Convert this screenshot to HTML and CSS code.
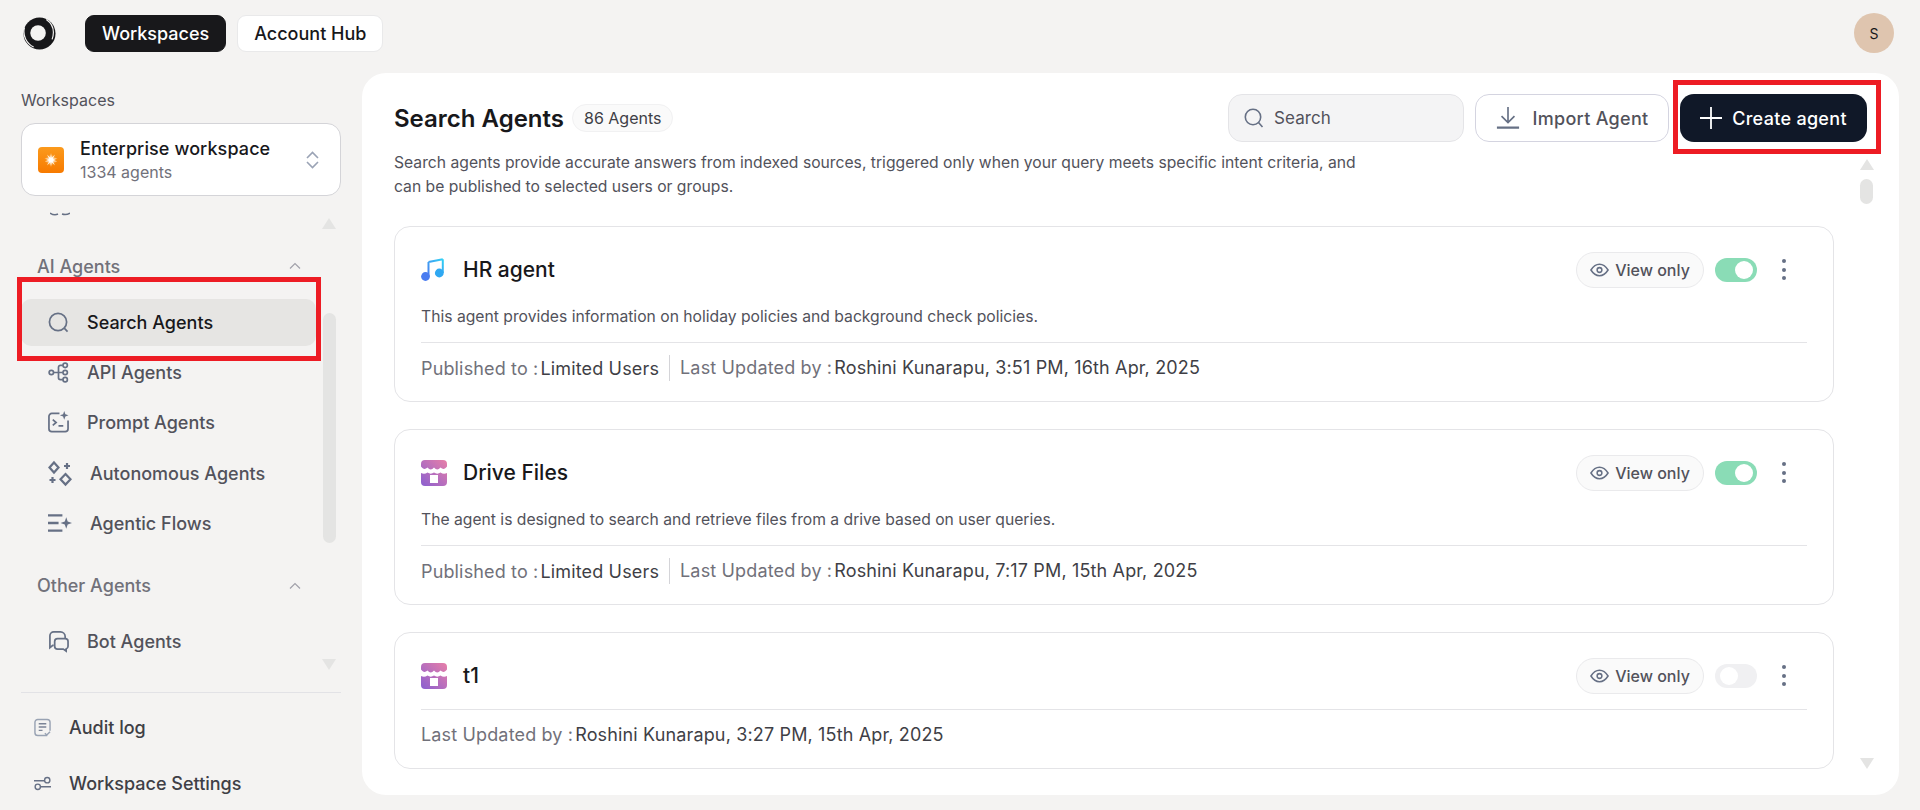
FILE: index.html
```html
<!DOCTYPE html>
<html lang="en">
<head>
  <meta charset="UTF-8" />
  <title>Search Agents</title>
  <link rel="stylesheet" href="styles.css">
</head>
<body>
  <header class="topbar">
    <svg class="logo" viewBox="0 0 34 34">
      <circle cx="17" cy="17" r="16.5" fill="#17171a"/>
      <circle cx="15.500" cy="16.500" r="8" fill="#f4f3f2"/>
      <path d="M24 2.500C30.500 7 33 14 30 23" fill="none" stroke="#f4f3f2" stroke-width="1.200"/>
      <path d="M1.500 11C-.5 19 3.500 27.500 11 31" fill="none" stroke="#f4f3f2" stroke-width="1.200"/>
    </svg>
    <a class="tab tab-active">Workspaces</a>
    <a class="tab">Account Hub</a>
    <div class="avatar">S</div>
  </header>

  <div class="layout">
    <aside class="sidebar">
      <div class="ws-label">Workspaces</div>
      <div class="ws-box">
        <svg class="ws-icon" viewBox="0 0 26 26">
          <defs>
            <linearGradient id="orange" x1="0" y1="0" x2="0" y2="1">
              <stop offset="0" stop-color="#fb9a1c"/>
              <stop offset="1" stop-color="#f77a00"/>
            </linearGradient>
            <radialGradient id="glow">
              <stop offset="0" stop-color="#fff"/>
              <stop offset="0.5" stop-color="#ffe9c8" stop-opacity=".6"/>
              <stop offset="1" stop-color="#ffb347" stop-opacity="0"/>
            </radialGradient>
          </defs>
          <rect width="26" height="26" rx="4" fill="url(#orange)"/>
          <circle cx="13" cy="13" r="6" fill="url(#glow)"/>
          <path d="M13 6l.7 5 3.300-3.500-2.300 4.300 4.800-.3-4.800 1.500 4.800 1.500-4.800-.3 2.300 4.300-3.300-3.500-.7 5-.7-5-3.300 3.500 2.300-4.300-4.800.3 4.800-1.500-4.800-1.500 4.800.3L9 7.500l3.300 3.500z" fill="#fff"/>
        </svg>
        <div class="ws-text">
          <div class="ws-name">Enterprise workspace</div>
          <div class="ws-count">1334 agents</div>
        </div>
        <svg class="ws-switch" viewBox="0 0 13 18" fill="none" stroke="#9aa3b5" stroke-width="1.600">
          <path d="M1 7L6.500 1.500 12 7"/>
          <path d="M1 11l5.500 5.500L12 11"/>
        </svg>
      </div>

      <div class="nav-scroll">
        <svg class="cut-icon" viewBox="0 0 20 4" fill="none" stroke="#667085" stroke-width="1.500">
          <path d="M0 1c3 2 6 2 8 1M12 2c3 1 5 1 8-1"/>
        </svg>

        <div class="nav-head">AI Agents
          <svg viewBox="0 0 12 8" fill="none" stroke="#a1a1aa" stroke-width="1.200"><path d="M1 6.500l5-5 5 5"/></svg>
        </div>
        <div class="nav-items">
          <a class="nav-item nav-item-active">
            <svg viewBox="0 0 22 22" fill="none" stroke="#667085" stroke-width="1.800"><circle cx="10.500" cy="10.500" r="9"/><path d="M17 17l3.500 3.500"/></svg>
            Search Agents
          </a>
          <a class="nav-item">
            <svg viewBox="0 0 22 22" fill="none" stroke="#667085" stroke-width="1.800"><circle cx="3.500" cy="11" r="2.300"/><circle cx="18" cy="3.500" r="2.300"/><circle cx="18" cy="11" r="2.300"/><circle cx="18" cy="18.500" r="2.300"/><path d="M6 11h9.500M15.500 3.500H13a2 2 0 0 0-2 2v11a2 2 0 0 0 2 2h2.500"/></svg>
            API Agents
          </a>
          <a class="nav-item">
            <svg viewBox="0 0 22 22" fill="none" stroke="#667085" stroke-width="1.800"><path d="M12 1.500H4a3 3 0 0 0-3 3v13a3 3 0 0 0 3 3h14a3 3 0 0 0 3-3V9"/><path d="M5 8l3.500 3L5 14M11 14.500h5"/><path d="M17 -1l1.200 3.300 3.300 1.200-3.300 1.200L17 8l-1.200-3.300-3.300-1.200 3.300-1.200z" fill="#667085" stroke="none"/></svg>
            Prompt Agents
          </a>
          <a class="nav-item nav-item-wide">
            <svg viewBox="1 0 23 24" fill="none" stroke="#667085" stroke-width="2.200"><path d="M6.500 1.500l4.500 5-4.500 5-4.500-5z"/><path d="M18 13l5 5.300-5 5.300-5-5.300z"/><path d="M19.500 2v6M16.500 5h6M5 16v6M2 19h6"/></svg>
            Autonomous Agents
          </a>
          <a class="nav-item nav-item-wide">
            <svg viewBox="0 0 25 24" fill="none" stroke="#667085" stroke-width="2.400"><path d="M0 4h15M0 12h11M0 20h15"/><path d="M19 6l1.500 4.500L25 12l-4.500 1.500L19 18l-1.500-4.500L13 12l4.500-1.500z" fill="#667085" stroke="none"/></svg>
            Agentic Flows
          </a>
        </div>

        <div class="nav-head nav-head-other">Other Agents
          <svg viewBox="0 0 12 8" fill="none" stroke="#a1a1aa" stroke-width="1.200"><path d="M1 6.500l5-5 5 5"/></svg>
        </div>
        <div class="nav-items">
          <a class="nav-item">
            <svg viewBox="0 0 22 22" fill="none" stroke="#667085" stroke-width="1.800"><path d="M6 15H5l-3 2.500V5a4 4 0 0 1 4-4h7a5 5 0 0 1 5 5v2"/><path d="M10 8h8a3 3 0 0 1 3 3v5a3 3 0 0 1-2 2.800V21l-3-2h-6a3 3 0 0 1-3-3v-5a3 3 0 0 1 3-3z"/></svg>
            Bot Agents
          </a>
        </div>

        <span class="scroll-arrow scroll-up"></span>
        <span class="scroll-thumb"></span>
        <span class="scroll-arrow scroll-down"></span>
      </div>

      <div class="side-foot">
        <a class="foot-item">
          <svg viewBox="0 0 18 20" fill="none" stroke="#98a2b3" stroke-width="1.500"><path d="M14 18.500H4a3 3 0 0 1-3-3v-11a3 3 0 0 1 3-3h10a3 3 0 0 1 3 3v9"/><path d="M5 6h8M5 9.500h8M5 13h4" stroke="#7b8496"/><path d="M11.500 16l2 2 3.500-3.500"/></svg>
          Audit log
        </a>
        <a class="foot-item">
          <svg viewBox="0 0 18 14" fill="none" stroke="#667085" stroke-width="1.500"><path d="M0 4h11M7 10.500h11"/><circle cx="14" cy="3.500" r="2.800"/><circle cx="4" cy="10.500" r="2.800"/></svg>
          Workspace Settings
        </a>
      </div>
    </aside>

    <main class="panel">
      <div class="panel-head">
        <div class="panel-top">
          <div class="title-row">
            <h1>Search Agents</h1>
            <span class="count-pill">86 Agents</span>
          </div>
          <div class="panel-actions">
            <div class="search-box">
              <svg viewBox="0 0 20 20" fill="none" stroke="#667085" stroke-width="1.600"><circle cx="9" cy="9" r="7.700"/><path d="M14.500 14.500l4 4.500"/></svg>
              Search
            </div>
            <a class="btn-import">
              <svg viewBox="0 0 26 24" fill="none" stroke="#667085" stroke-width="1.800"><path d="M13 0v16M6 10l7 7 7-7"/><path d="M1 22.500h24" stroke-width="2.400"/></svg>
              Import Agent
            </a>
            <a class="btn-create">
              <svg viewBox="0 0 22 22" fill="none" stroke="#fff" stroke-width="1.800"><path d="M11 0v22M0 11h22"/></svg>
              Create agent
            </a>
          </div>
        </div>
        <p class="panel-desc">Search agents provide accurate answers from indexed sources, triggered only when your query meets specific intent criteria, and can be published to selected users or groups.</p>
      </div>

      <span class="scroll-arrow panel-up"></span>
      <span class="scroll-thumb panel-thumb"></span>
      <span class="scroll-arrow scroll-down panel-down"></span>

      <div class="cards">
        <section class="card">
          <div class="card-top">
            <svg class="card-icon" viewBox="0 0 23 23">
              <defs>
                <linearGradient id="music" x1="0" y1="1" x2="1" y2="0">
                  <stop offset="0" stop-color="#4a7cf0"/>
                  <stop offset="1" stop-color="#2fd0f5"/>
                </linearGradient>
              </defs>
              <path d="M7.500 4L21.800 1.200M7.500 4V18M21.800 1.200V15" fill="none" stroke="url(#music)" stroke-width="2"/>
              <circle cx="4.500" cy="18.500" r="4.400" fill="#4a7cf0"/>
              <circle cx="18.300" cy="15" r="4.400" fill="#2fa8f2"/>
            </svg>
            <h2>HR agent</h2>
            <div class="card-tools">
              <span class="view-pill">
                <svg viewBox="0 0 20 14" fill="none" stroke="#667085" stroke-width="1.600"><path d="M1 7c2.500-4 5.500-6 9-6s6.500 2 9 6c-2.500 4-5.500 6-9 6s-6.500-2-9-6z"/><circle cx="10" cy="7" r="2.500"/></svg>
                View only
              </span>
              <span class="toggle toggle-on"></span>
              <span class="dots"><i></i><i></i><i></i></span>
            </div>
          </div>
          <p class="card-desc">This agent provides information on holiday policies and background check policies.</p>
          <div class="card-meta">
            <span class="meta-part"><b>Published to :</b>Limited Users</span>
            <span class="meta-part"><b>Last Updated by :</b>Roshini Kunarapu, 3:51 PM, 16th Apr, 2025</span>
          </div>
        </section>

        <section class="card">
          <div class="card-top">
            <svg class="card-icon card-icon-store" viewBox="0 0 26 26">
              <defs>
                <linearGradient id="store" x1="0" y1="1" x2="1" y2="0">
                  <stop offset="0" stop-color="#8a5fd0"/>
                  <stop offset="1" stop-color="#e87fa8"/>
                </linearGradient>
              </defs>
              <rect width="26" height="26" rx="4" fill="url(#store)"/>
              <path d="M0 6.500c2.200 3 4.200 3 6.500 1 2.200 2.500 4.300 2.500 6.500 0 2.200 2.500 4.300 2.500 6.500 0 2.300 2 4.300 2 6.500-1V13c-2.200 1-4.300 1-6.500-.5-2.200 1.500-4.300 1.500-6.500 0-2.200 1.500-4.300 1.500-6.500 0C4.300 14 2.200 14 0 13z" fill="#fff"/>
              <rect x="9" y="15" width="8" height="8" fill="#fff"/>
            </svg>
            <h2>Drive Files</h2>
            <div class="card-tools">
              <span class="view-pill">
                <svg viewBox="0 0 20 14" fill="none" stroke="#667085" stroke-width="1.600"><path d="M1 7c2.500-4 5.500-6 9-6s6.500 2 9 6c-2.500 4-5.500 6-9 6s-6.500-2-9-6z"/><circle cx="10" cy="7" r="2.500"/></svg>
                View only
              </span>
              <span class="toggle toggle-on"></span>
              <span class="dots"><i></i><i></i><i></i></span>
            </div>
          </div>
          <p class="card-desc">The agent is designed to search and retrieve files from a drive based on user queries.</p>
          <div class="card-meta">
            <span class="meta-part"><b>Published to :</b>Limited Users</span>
            <span class="meta-part"><b>Last Updated by :</b>Roshini Kunarapu, 7:17 PM, 15th Apr, 2025</span>
          </div>
        </section>

        <section class="card">
          <div class="card-top">
            <svg class="card-icon card-icon-store" viewBox="0 0 26 26">
              <rect width="26" height="26" rx="4" fill="url(#store)"/>
              <path d="M0 6.500c2.200 3 4.200 3 6.500 1 2.200 2.500 4.300 2.500 6.500 0 2.200 2.500 4.300 2.500 6.500 0 2.300 2 4.300 2 6.500-1V13c-2.200 1-4.300 1-6.500-.5-2.200 1.500-4.300 1.500-6.500 0-2.200 1.500-4.300 1.500-6.500 0C4.300 14 2.200 14 0 13z" fill="#fff"/>
              <rect x="9" y="15" width="8" height="8" fill="#fff"/>
            </svg>
            <h2>t1</h2>
            <div class="card-tools">
              <span class="view-pill">
                <svg viewBox="0 0 20 14" fill="none" stroke="#667085" stroke-width="1.600"><path d="M1 7c2.500-4 5.500-6 9-6s6.500 2 9 6c-2.500 4-5.500 6-9 6s-6.500-2-9-6z"/><circle cx="10" cy="7" r="2.500"/></svg>
                View only
              </span>
              <span class="toggle"></span>
              <span class="dots"><i></i><i></i><i></i></span>
            </div>
          </div>
          <div class="card-meta card-meta-nodesc">
            <span class="meta-part"><b>Last Updated by :</b>Roshini Kunarapu, 3:27 PM, 15th Apr, 2025</span>
          </div>
        </section>
      </div>
    </main>
  </div>

  <div class="mark mark-nav"></div>
  <div class="mark mark-create"></div>
</body>
</html>
```

FILE: styles.css
```css
* {
  box-sizing: border-box;
}
body {
  margin: 0;
  height: 810px;
  overflow: hidden;
  background-color: #f4f3f2;
  color: #18181b;
  font-family: Inter, "Liberation Sans", sans-serif;
}
a {
  text-decoration: none;
}

/* top bar */
.topbar {
  height: 73px;
  display: flex;
  align-items: center;
  padding: 0 26px 7px 23px;
}
.logo {
  width: 33px;
  height: 33px;
  margin-right: 29px;
}
.tab {
  height: 37px;
  padding: 0 16px;
  margin-right: 11px;
  display: flex;
  align-items: center;
  font-size: 18px;
  font-weight: 500;
  color: #18181b;
  background-color: #fff;
  border: 1px solid #e9e9ea;
  border-radius: 9px;
}
.tab-active {
  background-color: #18181b;
  border-color: #18181b;
  color: #fff;
}
.avatar {
  margin-left: auto;
  width: 40px;
  height: 40px;
  border-radius: 50%;
  background-color: #dfc5af;
  display: flex;
  align-items: center;
  justify-content: center;
  font-size: 14px;
}

.layout {
  display: flex;
  height: 722px;
}

/* sidebar */
.sidebar {
  width: 362px;
  flex-shrink: 0;
  padding: 0 21px;
  display: flex;
  flex-direction: column;
}
.ws-label {
  font-size: 16px;
  line-height: 20px;
  margin-top: 17px;
  color: #52525b;
}
.ws-box {
  height: 73px;
  flex-shrink: 0;
  margin-top: 13px;
  padding: 0 21px 0 16px;
  display: flex;
  align-items: center;
  background-color: #fff;
  border: 1px solid #d4d4d8;
  border-radius: 14px;
}
.ws-icon {
  width: 26px;
  height: 26px;
  margin-right: 16px;
}
.ws-text {
  flex: 1;
}
.ws-name {
  font-size: 18px;
  font-weight: 500;
  line-height: 24px;
  letter-spacing: 0.1px;
}
.ws-count {
  font-size: 16px;
  line-height: 22px;
  color: #71717a;
}
.ws-switch {
  width: 13px;
  height: 18px;
}
.nav-scroll {
  position: relative;
  height: 496px;
  flex-shrink: 0;
  overflow: hidden;
}
.cut-icon {
  display: block;
  width: 20px;
  height: 4px;
  margin: 16px 0 0 29px;
}
.nav-head {
  height: 24px;
  margin-top: 38px;
  padding: 0 40px 0 16px;
  display: flex;
  align-items: center;
  justify-content: space-between;
  font-size: 18px;
  font-weight: 500;
  color: #71717a;
}
.nav-head svg {
  width: 12px;
  height: 8px;
}
.nav-head-other {
  margin-top: 27px;
}
.nav-items {
  margin-top: 21px;
  width: 295px;
  display: flex;
  flex-direction: column;
  gap: 3.2px;
}
.nav-head-other + .nav-items {
  margin-top: 20px;
}
.nav-item {
  height: 47px;
  padding-left: 27px;
  display: flex;
  align-items: center;
  gap: 18px;
  font-size: 18px;
  font-weight: 500;
  color: #52525b;
  border-radius: 10px;
}
.nav-item svg {
  width: 21px;
  height: 21px;
  flex-shrink: 0;
  overflow: visible;
}
.nav-item-wide svg {
  width: 24px;
  height: 24px;
}
.nav-item-active {
  background-color: #e6e5e3;
  color: #18181b;
}
.scroll-arrow {
  position: absolute;
  width: 0;
  height: 0;
  border-left: 7px solid transparent;
  border-right: 7px solid transparent;
  border-bottom: 11px solid #e4e4e3;
}
.scroll-down {
  border-bottom: 0;
  border-top: 11px solid #e4e4e3;
}
.nav-scroll .scroll-up {
  right: 5px;
  top: 22px;
}
.nav-scroll .scroll-thumb {
  right: 5px;
  top: 117px;
  height: 230px;
}
.nav-scroll .scroll-down {
  right: 5px;
  top: 463px;
}
.scroll-thumb {
  position: absolute;
  width: 13px;
  background-color: #e4e4e3;
  border-radius: 7px;
}
.side-foot {
  flex-shrink: 0;
  border-top: 1px solid #e2e2e6;
  padding: 12px 0 0 13px;
  display: flex;
  flex-direction: column;
  gap: 11px;
}
.foot-item {
  height: 45px;
  display: flex;
  align-items: center;
  gap: 18px;
  font-size: 18px;
  font-weight: 500;
  color: #3f3f46;
}
.foot-item svg {
  width: 17px;
  height: 19px;
  flex-shrink: 0;
}

/* main panel */
.panel {
  position: relative;
  flex: 1;
  margin-right: 21px;
  background-color: #fff;
  border-radius: 24px;
  padding: 21px 65px 0 32px;
  overflow: hidden;
}
.panel-head {
  height: 132px;
}
.panel-top {
  display: flex;
  justify-content: space-between;
  align-items: center;
  height: 48px;
}
.title-row {
  display: flex;
  align-items: center;
  gap: 8px;
}
h1 {
  margin: 0;
  font-size: 24px;
  font-weight: 600;
  color: #18181b;
}
.count-pill {
  height: 28px;
  padding: 0 11px;
  display: flex;
  align-items: center;
  font-size: 16px;
  color: #3f3f46;
  background-color: #fafafa;
  border: 1px solid #f1f1f2;
  border-radius: 14px;
}
.panel-desc {
  width: 980px;
  margin: 9px 0 0;
  font-size: 15.7px;
  line-height: 24px;
  color: #52525b;
}
.panel-actions {
  display: flex;
  gap: 11px;
  height: 48px;
  margin-right: -33px;
}
.search-box {
  width: 236px;
  padding: 0 15px;
  display: flex;
  align-items: center;
  gap: 10px;
  font-size: 17px;
  letter-spacing: 0.1px;
  color: #52525b;
  background-color: #f4f4f5;
  border: 1px solid #e4e4e7;
  border-radius: 14px;
}
.search-box svg {
  width: 20px;
  height: 20px;
}
.btn-import {
  width: 194px;
  display: flex;
  align-items: center;
  justify-content: center;
  gap: 13px;
  font-size: 18px;
  font-weight: 500;
  letter-spacing: 0.3px;
  color: #52525b;
  background-color: #fff;
  border: 1px solid #d4d4e0;
  border-radius: 14px;
}
.btn-import svg {
  width: 24px;
  height: 24px;
}
.btn-create {
  width: 187px;
  display: flex;
  align-items: center;
  justify-content: center;
  gap: 10px;
  font-size: 18px;
  font-weight: 500;
  letter-spacing: 0.3px;
  color: #fff;
  background-color: #101828;
  border-radius: 14px;
}
.btn-create svg {
  width: 22px;
  height: 22px;
}
.panel-up {
  right: 25px;
  top: 86px;
}
.panel-thumb {
  right: 26px;
  top: 106px;
  height: 25px;
}
.panel-down {
  right: 25px;
  top: 685px;
}

/* cards */
.cards {
  display: flex;
  flex-direction: column;
  gap: 27px;
}
.card {
  padding: 0 26px;
  background-color: #fff;
  border: 1px solid #e4e4e7;
  border-radius: 16px;
}
.card-top {
  height: 74px;
  padding-top: 11px;
  display: flex;
  align-items: center;
}
.card-icon {
  width: 23px;
  height: 23px;
  margin-right: 19px;
}
.card-icon-store {
  width: 26px;
  height: 26px;
  margin-right: 16px;
}
h2 {
  margin: 0;
  font-size: 21px;
  font-weight: 500;
  color: #18181b;
}
.card-tools {
  margin-left: auto;
  margin-right: 21px;
  display: flex;
  align-items: center;
}
.view-pill {
  height: 36px;
  width: 128px;
  display: flex;
  align-items: center;
  justify-content: center;
  gap: 6px;
  font-size: 16px;
  font-weight: 500;
  color: #52525b;
  background-color: #fafafa;
  border: 1px solid #eaeaec;
  border-radius: 18px;
}
.view-pill svg {
  width: 19px;
  height: 14px;
}
.toggle {
  position: relative;
  width: 42px;
  height: 24px;
  margin-left: 11px;
  border-radius: 12px;
  background-color: #f0f0f2;
}
.toggle::after {
  content: "";
  position: absolute;
  top: 3px;
  left: 5px;
  width: 18px;
  height: 18px;
  border-radius: 50%;
  background-color: #fff;
}
.toggle-on {
  background-color: #8adcb6;
}
.toggle-on::after {
  left: 20px;
}
.dots {
  margin-left: 25px;
  display: flex;
  flex-direction: column;
  gap: 4.5px;
}
.dots i {
  display: block;
  width: 4px;
  height: 4px;
  border-radius: 50%;
  background-color: #667085;
}
.card-desc {
  margin: 0;
  height: 42px;
  font-size: 15.7px;
  line-height: 32px;
  color: #52525b;
  border-bottom: 1px solid #e4e4e7;
}
.card-meta {
  height: 58px;
  display: flex;
  align-items: center;
  padding-bottom: 8px;
  font-size: 18px;
  letter-spacing: 0.15px;
  color: #3f3f46;
}
.card-meta-nodesc {
  height: 59px;
  margin-top: 2px;
  padding-bottom: 10px;
  border-top: 1px solid #e4e4e7;
}
.card-meta b {
  font-weight: 400;
  color: #71717a;
  margin-right: 2px;
}
.meta-part + .meta-part {
  margin-left: 10px;
  padding-left: 10px;
  border-left: 1px solid #d4d4d8;
  line-height: 26px;
}

/* red annotation boxes */
.mark {
  position: absolute;
  border: 5px solid #ed1c24;
}
.mark-nav {
  left: 17px;
  top: 277px;
  width: 304px;
  height: 84px;
}
.mark-create {
  left: 1673px;
  top: 80px;
  width: 208px;
  height: 74px;
}
```
